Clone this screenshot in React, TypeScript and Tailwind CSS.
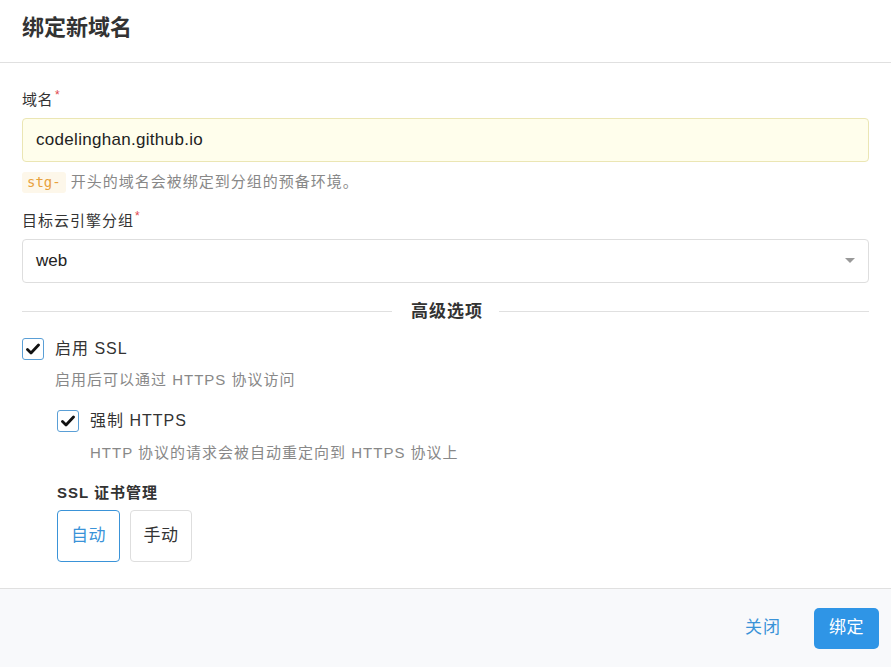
import React from "react";

const font = { fontFamily: '"Liberation Sans", "Noto Sans CJK SC", sans-serif' };

function Check() {
  return (
    <span className="flex h-[22px] w-[22px] shrink-0 items-center justify-center rounded-[3px] border border-[#5a9fd6] bg-white">
      <svg width="14" height="12" viewBox="0 0 14 12">
        <path d="M1.5 6.5 L5 10 L12.5 2" fill="none" stroke="#111" strokeWidth="2.8" strokeLinecap="round" strokeLinejoin="round" />
      </svg>
    </span>
  );
}

export default function App() {
  return (
    <div className="flex h-[667px] w-[891px] flex-col bg-white text-[#333]" style={font}>
      <div className="flex h-[63px] shrink-0 items-center border-b border-[#e0e0e0] px-[22px] pb-[8px]">
        <h1 className="text-[22px] font-bold text-[#333]">绑定新域名</h1>
      </div>
      <div className="flex flex-1 flex-col px-[22px] pt-[26px]">
        <label className="text-[15px] leading-[22px] tracking-[0.5px] text-[#333]">
          域名<span className="relative -top-[6px] ml-[2px] text-[12px] text-[#e0464c]">*</span>
        </label>
        <div className="mt-[6px] flex h-[44px] items-center rounded-[4px] border border-[#ebe6b4] bg-[#fffeec] px-[13px] text-[17px] tracking-[0.3px] text-[#222]">
          codelinghan.github.io
        </div>
        <div className="mt-[9px] flex items-center text-[15px] tracking-[1px] text-[#888]">
          <code className="rounded-[3px] bg-[#fdf7ea] px-[5px] text-[14px] tracking-normal text-[#e8a13c]" style={{ fontFamily: '"DejaVu Sans Mono", monospace' }}>stg-</code>
          <span className="ml-[5px]">开头的域名会被绑定到分组的预备环境。</span>
        </div>
        <label className="mt-[16px] text-[15px] leading-[22px] tracking-[1px] text-[#333]">
          目标云引擎分组<span className="relative -top-[6px] ml-[1px] text-[12px] text-[#e0464c]">*</span>
        </label>
        <div className="mt-[6px] flex h-[44px] items-center justify-between rounded-[4px] border border-[#dedede] bg-white pl-[13px] pr-[13px] text-[17px] text-[#222]">
          <span>web</span>
          <svg width="10" height="6" viewBox="0 0 10 6"><path d="M0 0 H10 L5 5 Z" fill="#999" /></svg>
        </div>
        <div className="mt-[16px] flex items-center">
          <div className="h-px flex-1 bg-[#e0e0e0]" />
          <span className="pl-[19px] pr-[16px] text-[17px] font-bold tracking-[1px] text-[#333]">高级选项</span>
          <div className="h-px w-[370px] bg-[#e0e0e0]" />
        </div>
        <div className="mt-[13px] flex items-center gap-[11px]">
          <Check />
          <span className="text-[16px] tracking-[1px] text-[#333]">启用 SSL</span>
        </div>
        <div className="ml-[33px] mt-[8px] text-[15px] tracking-[1px] text-[#888]">启用后可以通过 HTTPS 协议访问</div>
        <div className="ml-[35px] mt-[17px] flex items-center gap-[11px]">
          <Check />
          <span className="text-[16px] tracking-[1px] text-[#333]">强制 HTTPS</span>
        </div>
        <div className="ml-[68px] mt-[9px] text-[15px] tracking-[1px] text-[#888]">HTTP 协议的请求会被自动重定向到 HTTPS 协议上</div>
        <div className="ml-[35px] mt-[18px] text-[15px] font-bold tracking-[1px] text-[#333]">SSL 证书管理</div>
        <div className="ml-[35px] mt-[5px] flex gap-[10px]">
          <button className="h-[52px] w-[63px] rounded-[4px] border border-[#3a93d8] bg-white text-[17px] tracking-[0.5px] text-[#3a93d8]">自动</button>
          <button className="h-[52px] w-[62px] rounded-[4px] border border-[#dedede] bg-white text-[17px] tracking-[0.5px] text-[#333]">手动</button>
        </div>
      </div>
      <div className="flex h-[79px] shrink-0 items-center justify-end gap-[33px] border-t border-[#e0e0e0] bg-[#f8f9fb] pr-[12px]">
        <button className="text-[17px] tracking-[1px] text-[#3a93d8]">关闭</button>
        <button className="h-[41px] w-[65px] rounded-[5px] bg-[#2f95e6] text-[17px] tracking-[0.5px] text-white">绑定</button>
      </div>
    </div>
  );
}
